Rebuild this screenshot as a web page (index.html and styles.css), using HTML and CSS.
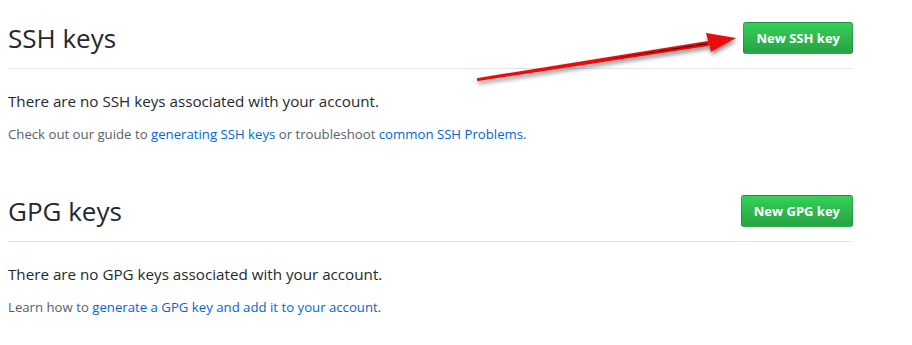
FILE: index.html
```html
<!DOCTYPE html>
<html>
    <head>
        <title>SSH and GPG keys</title>
        <meta charset="UTF-8">
        <link rel="stylesheet" href="styles.css">
    </head>
    <body>
        <div class="settings">
            <section class="keys">
                <div class="subhead">
                    <h2>SSH keys</h2>
                    <a class="btn" href="#">New SSH key</a>
                </div>
                <p class="blank">There are no SSH keys associated with your account.</p>
                <p class="note">
                    Check out our guide to <a href="#">generating SSH keys</a> or troubleshoot <a href="#">common SSH Problems</a>.
                </p>
            </section>
            <section class="keys">
                <div class="subhead">
                    <h2>GPG keys</h2>
                    <a class="btn" href="#">New GPG key</a>
                </div>
                <p class="blank">There are no GPG keys associated with your account.</p>
                <p class="note">
                    Learn how to <a href="#">generate a GPG key and add it to your account</a>.
                </p>
            </section>
            <svg class="arrow" width="300" height="70" viewBox="0 0 300 70">
                <defs>
                    <filter id="shade" x="-10%" y="-50%" width="120%" height="200%">
                        <feDropShadow dx="1" dy="3" stdDeviation="2" flood-color="#000" flood-opacity="0.45"/>
                    </filter>
                </defs>
                <g filter="url(#shade)">
                    <path d="M8 55 L238 18 L238 21 L8 56 Z" stroke="#e81010" stroke-width="2" stroke-linejoin="round"/>
                    <path d="M266 14 L236 9 L241 28 Z" fill="#e81010"/>
                </g>
            </svg>
        </div>
    </body>
</html>
```
FILE: styles.css
```css
body {
    margin: 0;
    background-color: white;
    font-family: "Open Sans", "Noto Sans", sans-serif;
    color: #24292e;
}
.settings {
    position: relative;
    width: 845px;
    padding: 22px 0 0 8px;
}
.subhead {
    display: flex;
    align-items: center;
    justify-content: space-between;
    padding-bottom: 14px;
    border-bottom: 1px solid #e1e4e8;
}
.subhead h2 {
    margin: 0;
    font-size: 26px;
    font-weight: 400;
    line-height: 32px;
}
.btn {
    display: inline-block;
    padding: 0 12px;
    height: 30px;
    line-height: 30px;
    font-size: 13px;
    font-weight: 700;
    color: white;
    text-decoration: none;
    background-image: linear-gradient(-180deg, #34d058 0%, #28a745 90%);
    border: 1px solid rgba(27, 31, 35, .2);
    border-radius: 3px;
}
.blank {
    margin: 22px 0 0;
    font-size: 15.2px;
}
.note {
    margin: 14px 0 0;
    font-size: 13.2px;
    color: #586069;
}
.note a {
    color: #0366d6;
    text-decoration: none;
}
.keys + .keys {
    margin-top: 52px;
}
.arrow {
    position: absolute;
    left: 470px;
    top: 24px;
}
```
